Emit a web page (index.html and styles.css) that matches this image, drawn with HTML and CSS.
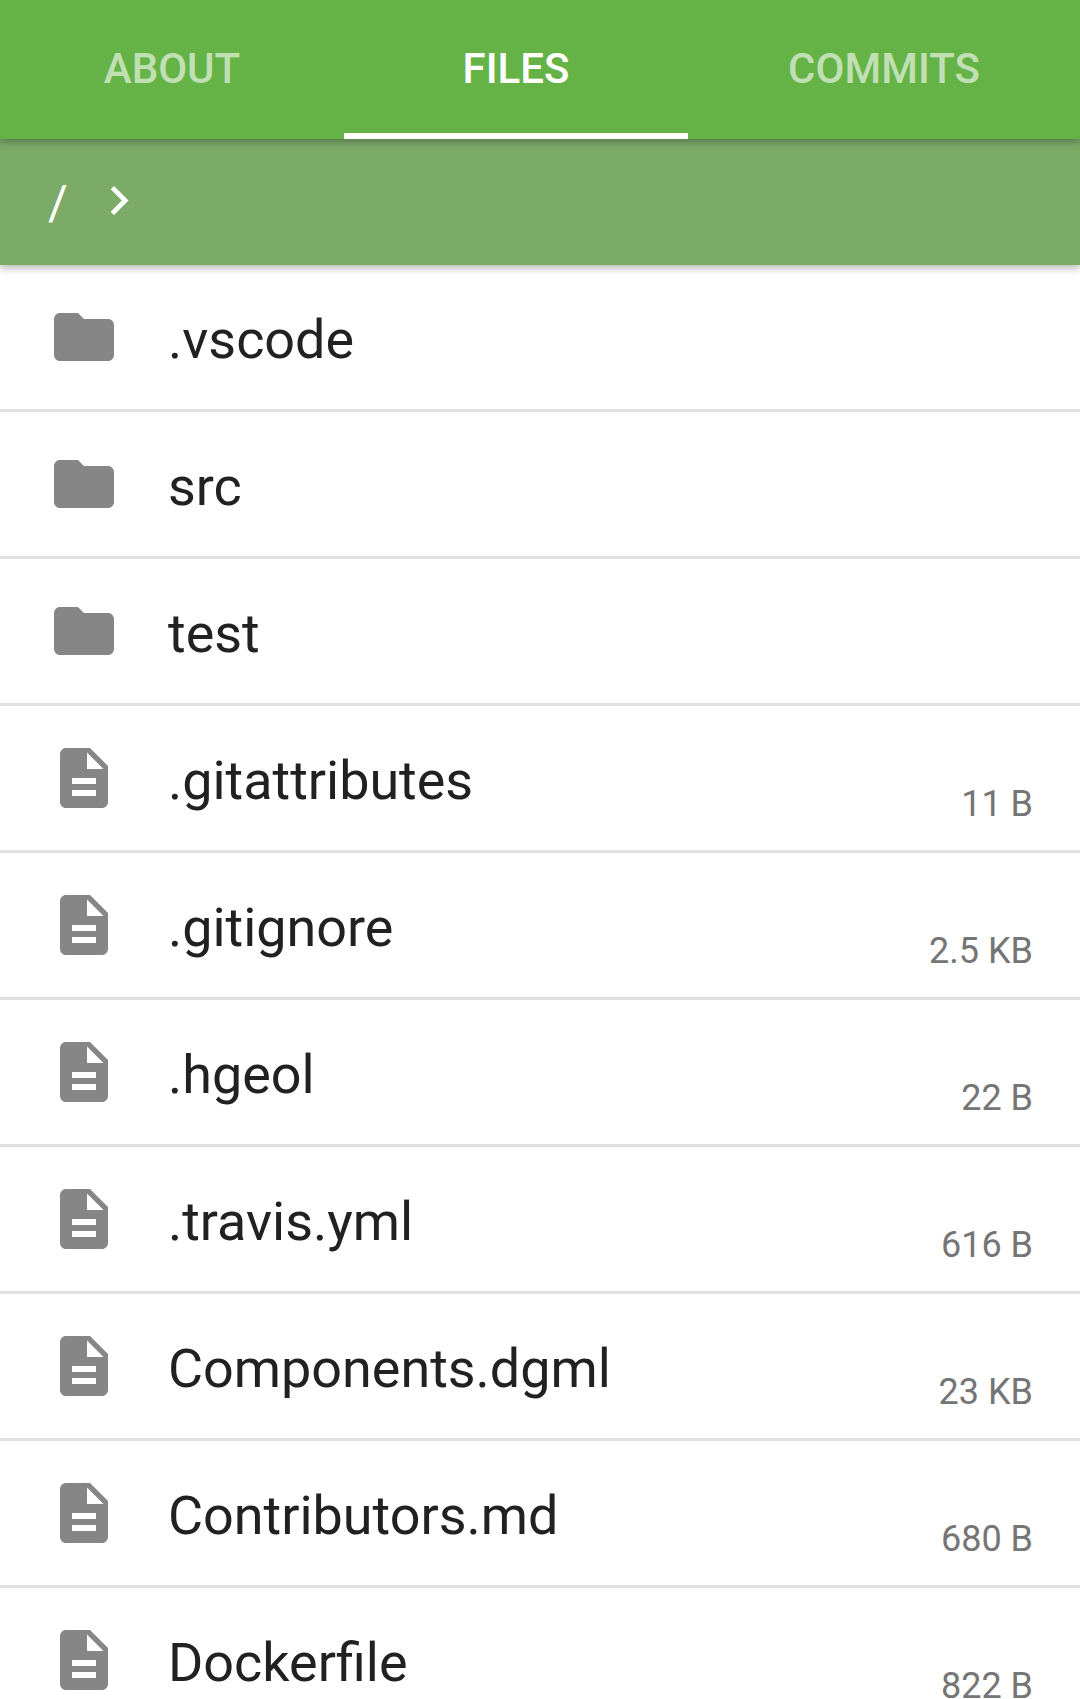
FILE: index.html
```html
<!DOCTYPE html>
<html lang="en">
<head>
<meta charset="utf-8">
<title>Files</title>
<link rel="stylesheet" href="styles.css">
</head>
<body>
<svg class="defs" aria-hidden="true">
  <symbol id="folder" viewBox="0 0 24 24"><path d="M10 4H4c-1.1 0-1.99.9-1.99 2L2 18c0 1.1.9 2 2 2h16c1.1 0 2-.9 2-2V8c0-1.1-.9-2-2-2h-8l-2-2z"/></symbol>
  <symbol id="file" viewBox="0 0 24 24"><path d="M14 2H6c-1.1 0-1.99.9-1.99 2L4 20c0 1.1.89 2 1.99 2H18c1.1 0 2-.9 2-2V8l-6-6zm2 16H8v-2h8v2zm0-4H8v-2h8v2zm-3-5V3.5L18.5 9H13z"/></symbol>
</svg>
<div class="app">
  <nav class="tabs">
    <div class="tab">ABOUT</div>
    <div class="tab active">FILES</div>
    <div class="tab">COMMITS</div>
  </nav>
  <div class="crumbs">
    <span class="slash">/</span>
    <svg class="chev" viewBox="0 0 19 29"><path d="M2.35 1.65L15.2 14.5 2.35 27.35"/></svg>
  </div>
  <ul class="list">
    <li class="row"><svg class="icon"><use href="#folder"/></svg><span class="name">.vscode</span></li>
    <li class="row"><svg class="icon"><use href="#folder"/></svg><span class="name">src</span></li>
    <li class="row"><svg class="icon"><use href="#folder"/></svg><span class="name">test</span></li>
    <li class="row"><svg class="icon"><use href="#file"/></svg><span class="name">.gitattributes</span><span class="size">11 B</span></li>
    <li class="row"><svg class="icon"><use href="#file"/></svg><span class="name">.gitignore</span><span class="size">2.5 KB</span></li>
    <li class="row"><svg class="icon"><use href="#file"/></svg><span class="name">.hgeol</span><span class="size">22 B</span></li>
    <li class="row"><svg class="icon"><use href="#file"/></svg><span class="name">.travis.yml</span><span class="size">616 B</span></li>
    <li class="row"><svg class="icon"><use href="#file"/></svg><span class="name">Components.dgml</span><span class="size">23 KB</span></li>
    <li class="row"><svg class="icon"><use href="#file"/></svg><span class="name">Contributors.md</span><span class="size">680 B</span></li>
    <li class="row"><svg class="icon"><use href="#file"/></svg><span class="name">Dockerfile</span><span class="size">822 B</span></li>
  </ul>
</div>
</body>
</html>
```
FILE: styles.css
```css
* { box-sizing: border-box; }
html, body { margin: 0; padding: 0; background: #fff; }
.defs { display: none; }
.app {
  height: 1699px;
  overflow: hidden;
  font-family: Roboto, "Liberation Sans", sans-serif;
}
.tabs {
  position: relative;
  z-index: 2;
  display: grid;
  grid-template-columns: 344px 344px 1fr;
  height: 139px;
  background: #65b346;
  box-shadow: 0 3px 8px rgba(0, 0, 0, .3);
}
.tab {
  display: flex;
  align-items: center;
  justify-content: center;
  height: 139px;
  padding-bottom: 2px;
  font-size: 42px;
  font-weight: 500;
  color: rgba(255, 255, 255, .6);
}
.tab.active {
  color: #fff;
  box-shadow: inset 0 -6px 0 #fff;
}
.crumbs {
  position: relative;
  z-index: 1;
  display: flex;
  align-items: center;
  height: 126px;
  padding-left: 48px;
  background: #7cab68;
  color: #fff;
  box-shadow: 0 3px 8px rgba(0, 0, 0, .3);
}
.slash { font-size: 48px; width: 62px; }
.chev {
  width: 19px;
  height: 29px;
  margin-bottom: 3px;
  fill: none;
  stroke: #fff;
  stroke-width: 4.7;
}
.list { list-style: none; margin: 0; padding: 0; }
.row {
  display: flex;
  align-items: center;
  height: 147px;
  padding: 0 47px 0 48px;
  border-bottom: 3px solid #e0e0e0;
}
.icon { flex: none; width: 72px; height: 72px; fill: #868686; }
.name {
  flex: 1;
  margin-left: 48px;
  padding-top: 4px;
  font-size: 53.9px;
  color: #212121;
}
.size {
  align-self: flex-end;
  padding-bottom: 25px;
  font-size: 36px;
  color: #757575;
}
```
